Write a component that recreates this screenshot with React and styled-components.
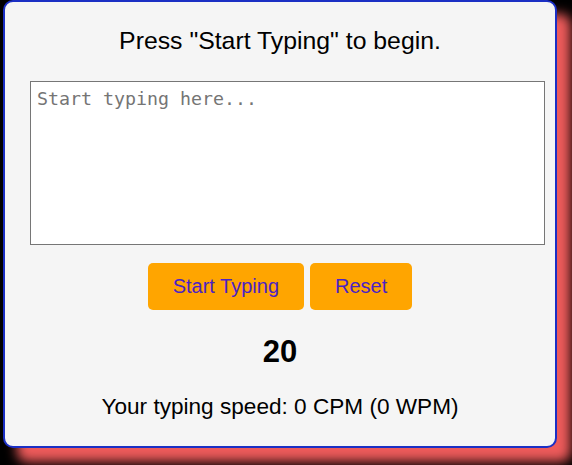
import styled, { createGlobalStyle } from 'styled-components';

const GlobalStyle = createGlobalStyle`
  html, body {
    margin: 0;
    padding: 0;
    background: #000;
  }
  body {
    min-height: 465px;
    font-family: 'Liberation Sans', Arial, sans-serif;
  }
`;

const Card = styled.div`
  box-sizing: border-box;
  width: 554px;
  height: 448px;
  margin-left: 3px;
  padding: 26px 25px 0;
  display: flex;
  flex-direction: column;
  align-items: center;
  background: #f5f5f5;
  border: 2px solid #1b2fc4;
  border-radius: 10px;
  box-shadow: 14px 14px 12px #ee5b5b;
`;

const Prompt = styled.p`
  margin: 0;
  font-size: 24.8px;
  line-height: 26px;
  color: #000;
`;

const TextArea = styled.textarea`
  box-sizing: border-box;
  align-self: flex-start;
  width: 515px;
  height: 164px;
  margin-top: 27px;
  padding: 6px;
  border: 1px solid #767676;
  background: #fff;
  resize: none;
  font-family: 'DejaVu Sans Mono', 'Liberation Mono', monospace;
  font-size: 18.3px;

  &::placeholder {
    color: #757575;
  }
`;

const Buttons = styled.div`
  display: flex;
  gap: 6px;
  margin-top: 18px;
`;

const Button = styled.button`
  height: 47px;
  padding: 0 25px;
  border: none;
  border-radius: 5px;
  background: #ffa500;
  color: #4b22c4;
  font-family: 'Liberation Sans', Arial, sans-serif;
  font-size: 20px;
  cursor: pointer;
`;

const Timer = styled.div`
  margin-top: 23px;
  font-size: 31px;
  font-weight: bold;
  line-height: 37px;
  color: #000;
`;

const Speed = styled.p`
  margin: 24px 0 0;
  font-size: 22.6px;
  line-height: 26px;
  color: #000;
`;

function App() {
  return (
    <>
      <GlobalStyle />
      <Card>
        <Prompt>Press "Start Typing" to begin.</Prompt>
        <TextArea placeholder="Start typing here..." />
        <Buttons>
          <Button>Start Typing</Button>
          <Button>Reset</Button>
        </Buttons>
        <Timer>20</Timer>
        <Speed>Your typing speed: 0 CPM (0 WPM)</Speed>
      </Card>
    </>
  );
}

export default App;
